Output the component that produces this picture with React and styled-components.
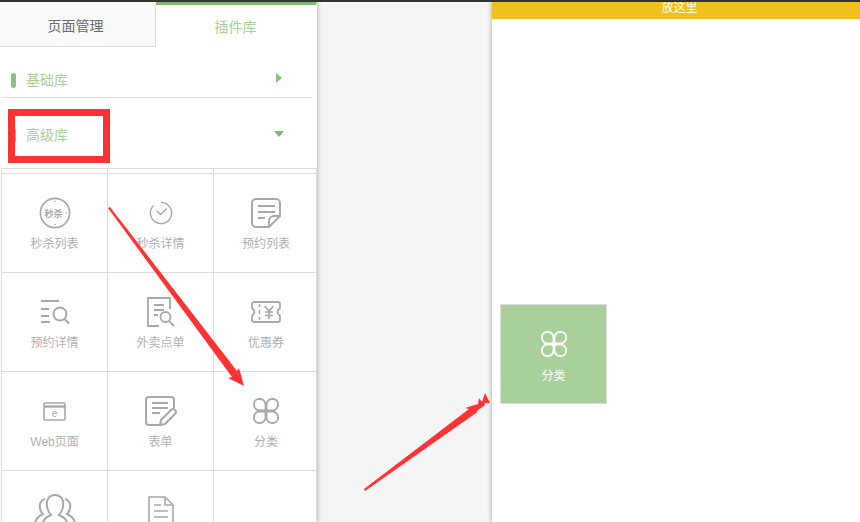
import React from 'react';
import styled, { createGlobalStyle } from 'styled-components';

const GlobalStyle = createGlobalStyle`
  html, body {
    margin: 0;
    height: 100%;
    overflow: hidden;
    background: #f5f5f5;
    font-family: "Liberation Sans", "Noto Sans CJK SC", sans-serif;
  }
  #root { height: 100%; }
`;

const Page = styled.div`
  position: relative;
  display: flex;
  height: 522px;
  box-sizing: border-box;
  border-top: 2px solid #333;
  overflow: hidden;
`;

const Sidebar = styled.div`
  flex: 0 0 317px;
  background: #fff;
  box-shadow: 1px 0 4px rgba(0, 0, 0, 0.25);
  z-index: 1;
`;

const Tabs = styled.div`
  display: flex;
  height: 45px;
`;

const Tab = styled.div`
  box-sizing: border-box;
  display: flex;
  align-items: center;
  justify-content: center;
  flex: ${props => (props.$active ? '1' : '0 0 156px')};
  font-size: 14px;
  padding: ${props => (props.$active ? '0 1px 0 0' : '0 4px 1px 0')};
  color: ${props => (props.$active ? '#a9cf9b' : '#6b6b6b')};
  background: ${props => (props.$active ? '#fff' : '#fafafa')};
  border-top: 3px solid ${props => (props.$active ? '#7fb972' : 'transparent')};
  border-right: ${props => (props.$active ? '1px solid transparent' : '1px solid #ddd')};
  border-bottom: ${props => (props.$active ? 'none' : '1px solid #ddd')};
`;

const LibRow = styled.div`
  display: flex;
  align-items: center;
  justify-content: space-between;
  height: 20px;
  font-size: 14px;
  line-height: 20px;
  color: #a9cf9b;
  padding: ${props => (props.$open ? '27px 33px 23px 11px' : '23px 30px 7px 11px')};
  margin-right: ${props => (props.$open ? '0' : '5px')};
  margin-left: 1px;
  border-bottom: ${props => (props.$open ? 'none' : '1px solid #ddd')};
`;

const LibName = styled.div`
  display: flex;
  align-items: center;
  gap: 10px;
  margin-left: -1px;
`;

const Pill = styled.span`
  width: 5px;
  height: 15px;
  border-radius: 3px;
  background: #8fbf80;
`;

const CaretRight = styled.span`
  width: 0;
  height: 0;
  margin-top: -4px;
  border-left: 6px solid #8fbf80;
  border-top: 5px solid transparent;
  border-bottom: 5px solid transparent;
`;

const CaretDown = styled.span`
  width: 0;
  height: 0;
  margin-top: -2px;
  border-top: 6px solid #7fb972;
  border-left: 5px solid transparent;
  border-right: 5px solid transparent;
`;

const Grid = styled.div`
  display: grid;
  grid-template-columns: 106px 106px 103px;
  grid-template-rows: 5px repeat(4, 99px);
  margin-left: 1px;
  border-top: 1px solid #ddd;
  border-left: 1px solid #ddd;
`;

const Cell = styled.div`
  box-sizing: border-box;
  display: flex;
  flex-direction: column;
  align-items: center;
  padding-top: ${props => (props.$stub ? '0' : '17px')};
  border-right: 1px solid #ddd;
  border-bottom: 1px solid #ddd;

  &:nth-child(3n) { padding-left: 2px; }
`;

const IconSlot = styled.div`
  display: flex;
  align-items: center;
  justify-content: center;
  height: 44px;
  color: ${props => (props.$light ? '#fff' : '#a8a8a8')};

  svg { display: block; overflow: visible; }
`;

const CellLabel = styled.div`
  font-size: 12px;
  line-height: 18px;
  color: #b0b0b0;
`;

const Canvas = styled.div`
  flex: 1;
  background: #f5f5f5;
`;

const Stage = styled.div`
  position: relative;
  flex: 0 0 368px;
  background: #fff;
  box-shadow: -1px 0 4px rgba(0, 0, 0, 0.25);
`;

const DropBar = styled.div`
  height: 17px;
  padding-left: 7px;
  background: #f0c01e;
  color: #fff;
  font-size: 12px;
  line-height: 12px;
  text-align: center;
  overflow: hidden;
`;

const DragTile = styled.div`
  position: absolute;
  left: 8px;
  top: 302px;
  box-sizing: border-box;
  width: 107px;
  height: 100px;
  display: flex;
  flex-direction: column;
  align-items: center;
  padding-top: 17px;
  background: #a9cf9b;
  border: 1px solid #ddd;

  ${CellLabel} { color: #fff; margin-top: 1px; }
`;

const RedBox = styled.div`
  position: absolute;
  left: 8px;
  top: 107px;
  box-sizing: border-box;
  width: 102px;
  height: 54px;
  border: 7px solid #ff3333;
  z-index: 2;
`;

const ArrowLayer = styled.svg`
  position: absolute;
  left: 0;
  top: -2px;
  width: 860px;
  height: 522px;
  pointer-events: none;
  z-index: 3;
`;

const SeckillIcon = () => (
  <svg width="32" height="32" viewBox="0 0 32 32" fill="none" stroke="currentColor">
    <circle cx="16" cy="16" r="14.6" strokeWidth="1.6" />
    <circle cx="16" cy="4.5" r="0.8" fill="currentColor" stroke="none" />
    <circle cx="16" cy="27.5" r="0.8" fill="currentColor" stroke="none" />
    <circle cx="27" cy="16" r="0.8" fill="currentColor" stroke="none" />
    <text x="14.5" y="19.5" textAnchor="middle" fontSize="9" fontWeight="700" fill="currentColor" stroke="none" fontFamily="Noto Sans CJK SC, sans-serif">秒杀</text>
  </svg>
);

const ClockIcon = () => (
  <svg width="24" height="24" viewBox="0 0 24 24" fill="none" stroke="currentColor" strokeWidth="1.4">
    <path d="M12 1.4 A10.6 10.6 0 1 1 4.5 4.5" />
    <path d="M7.500 9.500 L11.500 13.500 L18 7.500" />
  </svg>
);

const NoteIcon = () => (
  <svg width="30" height="30" viewBox="0 0 30 30" fill="none" stroke="currentColor" strokeWidth="2">
    <path d="M18 29 H5 A4 4 0 0 1 1 25 V5 A4 4 0 0 1 5 1 H25 A4 4 0 0 1 29 5 V18 Z" />
    <path d="M29 18 H23 A5 5 0 0 0 18 23 V29" />
    <path d="M7 8 H24 M7 14 H24 M7 20 H14" />
  </svg>
);

const ListSearchIcon = () => (
  <svg width="30" height="24" viewBox="0 0 30 24" fill="none" stroke="currentColor" strokeWidth="2">
    <path d="M1 1 H19 M1 9 H9 M1 16 H9 M1 22 H10" />
    <circle cx="20" cy="14" r="6.5" />
    <path d="M24.500 19 L29 23.500" />
  </svg>
);

const DocSearchIcon = () => (
  <svg width="28" height="30" viewBox="0 0 28 30" fill="none" stroke="currentColor" strokeWidth="1.8">
    <path d="M12 29 H1 V1 H23 V12" />
    <path d="M7 8 H17 M7 13 H17 M7 18 H11" />
    <circle cx="18.500" cy="20" r="5" />
    <path d="M22 24 L27 29" />
  </svg>
);

const CouponIcon = () => (
  <svg width="30" height="22" viewBox="0 0 30 22" fill="none" stroke="currentColor" strokeWidth="1.8">
    <path d="M3 1 H27 A2 2 0 0 1 29 3 V7 Q24 11 29 15 V19 A2 2 0 0 1 27 21 H3 A2 2 0 0 1 1 19 V15 Q6 11 1 7 V3 A2 2 0 0 1 3 1 Z" />
    <path d="M8.500 3 V6 M8.500 9 V13 M8.500 16 V19" strokeWidth="1.5" />
    <path d="M13.500 5 L18 10 L22.500 5 M14 11 H22 M14 14.500 H22 M18 10 V18" strokeWidth="1.6" />
  </svg>
);

const WebIcon = () => (
  <svg width="23" height="19" viewBox="0 0 23 19" fill="none" stroke="currentColor">
    <rect x="1" y="1" width="21" height="17" rx="1" strokeWidth="1.6" />
    <path d="M1 4.500 H22" strokeWidth="2.4" />
    <text x="11.500" y="15" textAnchor="middle" fontSize="10" fill="currentColor" stroke="none" fontFamily="Liberation Sans, sans-serif">e</text>
  </svg>
);

const FormIcon = () => (
  <svg width="32" height="30" viewBox="0 0 32 30" fill="none" stroke="currentColor" strokeWidth="2">
    <path d="M15 29 H4 A3 3 0 0 1 1 26 V4 A3 3 0 0 1 4 1 H26 A3 3 0 0 1 29 4 V12" />
    <path d="M7 7 H23 M7 12 H23 M7 17 H15" />
    <path d="M15 29 L16 24 L26 14 A2.500 2.500 0 0 1 30 18 L20 28 Z" />
  </svg>
);

const CloverIcon = () => (
  <svg width="26" height="26" viewBox="0 0 26 26" fill="none" stroke="currentColor" strokeWidth="1.8">
    {[0, 90, 180, 270].map(angle => (
      <path
        key={angle}
        transform={`rotate(${angle} 13 13)`}
        d="M6 1 H7 A5.500 5.500 0 0 1 12.500 6.500 V11 Q12.500 12.500 11 12.500 H6.500 A5.500 5.500 0 0 1 1 7 V6 A5 5 0 0 1 6 1 Z"
      />
    ))}
  </svg>
);

const UsersIcon = () => (
  <svg width="42" height="44" viewBox="0 -6 42 44" fill="none" stroke="currentColor" strokeWidth="2">
    <path d="M21 1 C15 1 12 6 13 12 C13.500 16 15 19 17 21 C12 23 8 27 8 33 V37 H34 V33 C34 27 30 23 25 21 C27 19 28.500 16 29 12 C30 6 27 1 21 1 Z" />
    <path d="M11 5 C7 6 5 10 6 14 C6.500 17 7.500 19 9 20 C5 22 1 25 1 30 V33 H7" />
    <path d="M31 5 C35 6 37 10 36 14 C35.500 17 34.500 19 33 20 C37 22 41 25 41 30 V33 H35" />
  </svg>
);

const PageIcon = () => (
  <svg width="26" height="44" viewBox="0 -8 26 44" fill="none" stroke="currentColor" strokeWidth="1.6">
    <path d="M17 1 H1 V31 H25 V9 Z" />
    <path d="M17 1 V9 H25" />
    <path d="M6 9 H13 M6 15 H20 M6 21 H20" />
  </svg>
);

// last row is cut off by the window, only the icons show
const plugins = [
  { name: '秒杀列表', icon: <SeckillIcon /> },
  { name: '秒杀详情', icon: <ClockIcon /> },
  { name: '预约列表', icon: <NoteIcon /> },
  { name: '预约详情', icon: <ListSearchIcon /> },
  { name: '外卖点单', icon: <DocSearchIcon /> },
  { name: '优惠券', icon: <CouponIcon /> },
  { name: 'Web页面', icon: <WebIcon /> },
  { name: '表单', icon: <FormIcon /> },
  { name: '分类', icon: <CloverIcon /> },
  { icon: <UsersIcon /> },
  { icon: <PageIcon /> },
  {},
];

function App() {
  return (
    <>
      <GlobalStyle />
      <Page>
        <Sidebar>
          <Tabs>
            <Tab>页面管理</Tab>
            <Tab $active>插件库</Tab>
          </Tabs>
          <LibRow>
            <LibName><Pill />基础库</LibName>
            <CaretRight />
          </LibRow>
          <LibRow $open>
            <LibName><Pill />高级库</LibName>
            <CaretDown />
          </LibRow>
          <Grid>
            <Cell $stub />
            <Cell $stub />
            <Cell $stub />
            {plugins.map((p, i) => (
              <Cell key={i}>
                {p.icon && <IconSlot>{p.icon}</IconSlot>}
                {p.name && <CellLabel>{p.name}</CellLabel>}
              </Cell>
            ))}
          </Grid>
        </Sidebar>
        <Canvas />
        <Stage>
          <DropBar>放这里</DropBar>
          <DragTile>
            <IconSlot $light><CloverIcon /></IconSlot>
            <CellLabel>分类</CellLabel>
          </DragTile>
        </Stage>
        <RedBox />
        <ArrowLayer viewBox="0 0 860 522">
          <polygon fill="#ff3333" points="108,208 110,207 237,371 239,368 244,386 228,378 232,377" />
          <polygon fill="#ff3333" points="364,489 469,409 465,408 478,404 479,398 482,402 485,393 490,403 484,403 485,405 477,411 475,418 476,413 365,491" />
        </ArrowLayer>
      </Page>
    </>
  );
}

export default App;
